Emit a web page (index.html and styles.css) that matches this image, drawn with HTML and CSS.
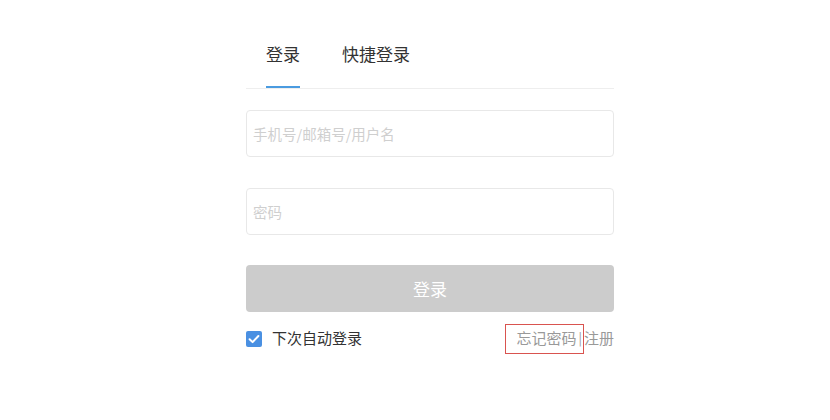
FILE: index.html
```html
<!DOCTYPE html>
<html lang="zh-CN">

<head>
  <meta charset="UTF-8" />
  <meta name="viewport" content="width=device-width, initial-scale=1.0" />
  <title>登录</title>
  <link rel="stylesheet" href="styles.css">
</head>

<body>
  <div class="login">
    <div class="tabs">
      <span class="tab active">登录</span>
      <span class="tab">快捷登录</span>
    </div>
    <form class="login-form">
      <input type="text" class="field" placeholder="手机号/邮箱号/用户名" />
      <input type="password" class="field" placeholder="密码" />
      <button type="button" class="submit">登录</button>
      <div class="extra">
        <label class="remember">
          <svg class="check" width="16" height="16" viewBox="0 0 16 16">
            <rect x="0" y="0" width="16" height="16" rx="2" fill="#4a90e2" />
            <path d="M3.6 8.2 L6.6 11.1 L12.4 5" fill="none" stroke="#fff" stroke-width="2" stroke-linecap="round" stroke-linejoin="round" />
          </svg>
          <span class="remember-text">下次自动登录</span>
        </label>
        <div class="links">
          <a class="forgot">忘记密码<span class="sep">|</span></a><a class="register">注册</a>
        </div>
      </div>
    </form>
  </div>
</body>

</html>
```

FILE: styles.css
```css
body {
  margin: 0;
  padding: 0 0 0 30px;
  background: #fff;
  font-family: "Noto Sans CJK SC", "Noto Sans", sans-serif;
  color: #333;
}

.login {
  width: 368px;
  margin: 0 auto;
}

.tabs {
  display: flex;
  gap: 42px;
  padding: 30px 0 0 20px;
  border-bottom: 1px solid #eeeeee;
}

.tab {
  font-size: 17px;
  line-height: 24px;
  padding: 12px 0 20px;
  border-bottom: 2px solid transparent;
  color: #333;
}

.tab.active {
  border-bottom-color: #4a9be0;
}

.login-form {
  display: flex;
  flex-direction: column;
  margin-top: 21px;
}

.field {
  box-sizing: border-box;
  width: 100%;
  height: 47px;
  margin-bottom: 30.5px;
  padding: 0 6px;
  border: 1px solid #e8e8e8;
  border-radius: 4px;
  font-family: inherit;
  font-size: 14.5px;
  color: #333;
  outline: none;
}

.field::placeholder {
  color: #cfcfcf;
}

.submit {
  height: 47px;
  border: none;
  border-radius: 4px;
  background: #cccccc;
  color: #fff;
  font-family: inherit;
  font-size: 17px;
}

.extra {
  display: flex;
  justify-content: space-between;
  align-items: center;
  height: 30px;
  margin-top: 12px;
}

.remember {
  display: flex;
  align-items: center;
  gap: 10px;
  font-size: 15px;
  color: #333;
}

.remember-text {
  padding-bottom: 3px;
}

.links {
  display: flex;
  align-items: center;
  font-size: 15px;
  color: #999;
}

.forgot {
  display: flex;
  align-items: center;
  box-sizing: border-box;
  height: 30px;
  padding: 0 0 3px 10px;
  border: 1px solid #d9534f;
}

.register {
  padding-bottom: 3px;
}

.sep {
  margin: 0 1px 0 2px;
  font-size: 13px;
}
```
